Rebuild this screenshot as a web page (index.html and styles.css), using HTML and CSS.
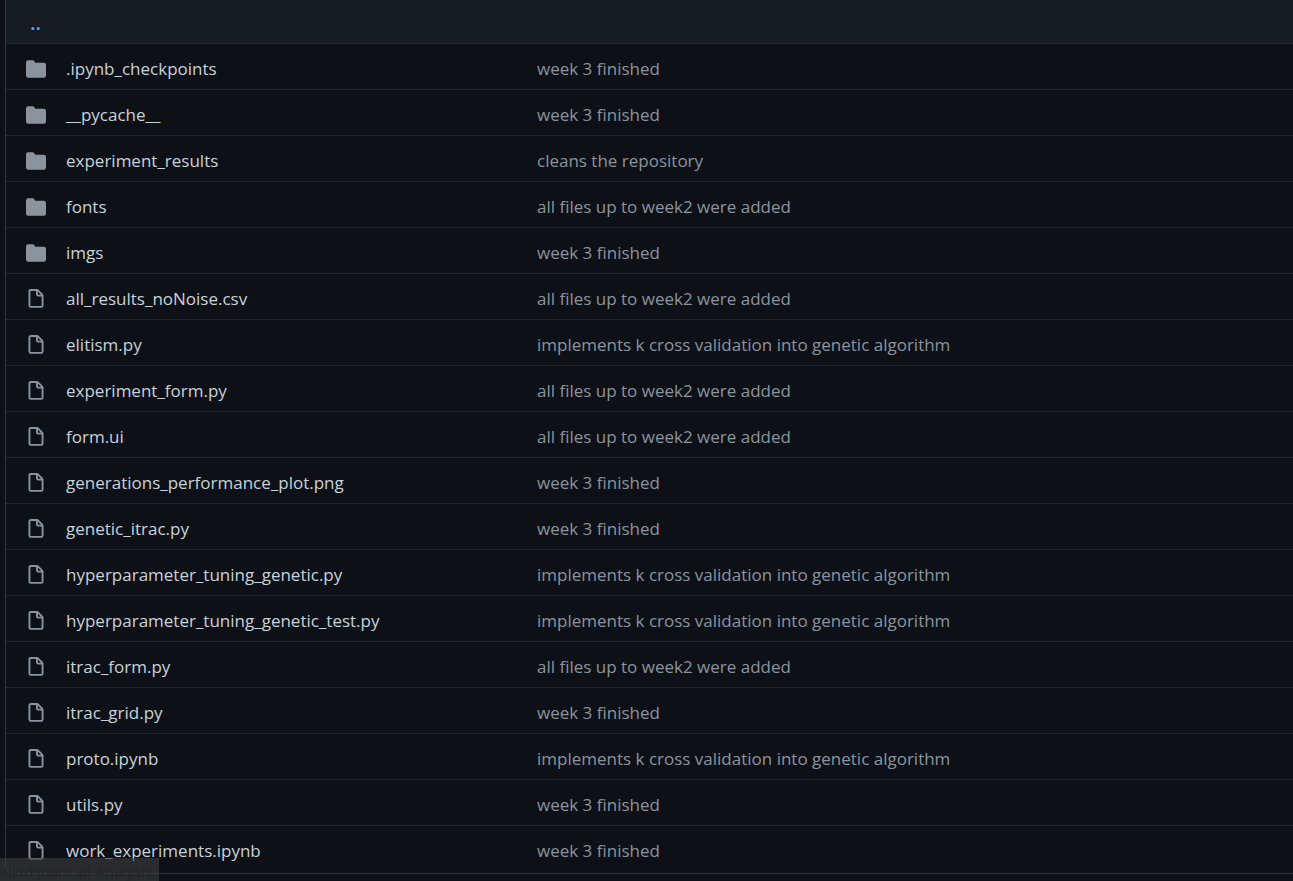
FILE: index.html
```
<!DOCTYPE html>
<html lang="en">
<head>
<meta charset="utf-8">
<title>Files</title>
<link rel="stylesheet" href="styles.css">
</head>
<body>
<svg class="sprite" aria-hidden="true">
<symbol id="folder" viewBox="0 0 16 16"><path d="M1.75 1A1.75 1.75 0 0 0 0 2.75v10.5C0 14.216.784 15 1.75 15h12.5A1.75 1.75 0 0 0 16 13.25v-8.5A1.75 1.75 0 0 0 14.25 3h-6.5a.25.25 0 0 1-.2-.1l-.9-1.2c-.33-.44-.85-.7-1.4-.7h-3.5z"/></symbol>
<symbol id="file" viewBox="0 0 16 16"><path fill-rule="evenodd" d="M3.75 1.5a.25.25 0 0 0-.25.25v11.5c0 .138.112.25.25.25h8.5a.25.25 0 0 0 .25-.25V6H9.75A1.75 1.75 0 0 1 8 4.25V1.5H3.75zm5.75.56v2.19c0 .138.112.25.25.25h2.19L9.5 2.06zM2 1.75C2 .784 2.784 0 3.75 0h5.086c.464 0 .909.184 1.237.513l3.414 3.414c.329.328.513.773.513 1.237v8.086A1.75 1.75 0 0 1 12.25 15h-8.5A1.75 1.75 0 0 1 2 13.25V1.75z"/></symbol>
</svg>
<main class="listing">
<a class="parent" href="#">..</a>
<table class="files">
<tbody id="rows"></tbody>
</table>
</main>
<div class="status">aiki/Financial-Analysis</div>
<script src="files.js"></script>
</body>
</html>
```
FILE: styles.css
```
body {
  margin: 0;
  background: #0d1117;
  color: #c9d1d9;
  font: 17px/26px "Segoe UI", "Open Sans", "Noto Sans", sans-serif;
  overflow: hidden;
}
.sprite { display: none; }
.listing {
  margin-left: 5px;
  border: solid #30363d;
  border-width: 0 0 1px 1px;
  border-bottom-left-radius: 8px;
}
a { color: inherit; text-decoration: none; }
.parent {
  display: block;
  padding: 10px 24px 7px;
  background: #161b22;
  color: #58a6ff;
  font-size: 20px;
  font-weight: 600;
}
.files {
  width: 100%;
  border-collapse: separate;
  border-spacing: 0;
  table-layout: fixed;
}
.files td {
  height: 26px;
  padding: 12px 0 7px;
  border-top: 1px solid #21262d;
  white-space: nowrap;
}
.files tr:last-child td { padding-bottom: 9px; }
.files .kind { width: 40px; padding-left: 20px; }
.files .name { width: 471px; }
.files .message { color: #8b949e; }
.icon {
  display: block;
  width: 20px;
  height: 20px;
  fill: #8b949e;
}
.status {
  position: fixed;
  left: 0;
  bottom: 0;
  padding: 3px 7px 0 0;
  background: rgba(60, 61, 62, 0.6);
  color: #242629;
  font-size: 15px;
  line-height: 20px;
  white-space: nowrap;
}
```
FILE: files.js
```
const week3 = "week 3 finished";
const week2 = "all files up to week2 were added";
const cross = "implements k cross validation into genetic algorithm";
const files = [
  ["folder", ".ipynb_checkpoints", week3],
  ["folder", "__pycache__", week3],
  ["folder", "experiment_results", "cleans the repository"],
  ["folder", "fonts", week2],
  ["folder", "imgs", week3],
  ["file", "all_results_noNoise.csv", week2],
  ["file", "elitism.py", cross],
  ["file", "experiment_form.py", week2],
  ["file", "form.ui", week2],
  ["file", "generations_performance_plot.png", week3],
  ["file", "genetic_itrac.py", week3],
  ["file", "hyperparameter_tuning_genetic.py", cross],
  ["file", "hyperparameter_tuning_genetic_test.py", cross],
  ["file", "itrac_form.py", week2],
  ["file", "itrac_grid.py", week3],
  ["file", "proto.ipynb", cross],
  ["file", "utils.py", week3],
  ["file", "work_experiments.ipynb", week3]
];
document.getElementById("rows").innerHTML = files.map(([kind, name, message]) =>
  `<tr><td class="kind"><svg class="icon" aria-label="${kind}"><use href="#${kind}"/></svg></td>` +
  `<td class="name"><a href="#">${name}</a></td>` +
  `<td class="message"><a href="#">${message}</a></td></tr>`).join("");
```
